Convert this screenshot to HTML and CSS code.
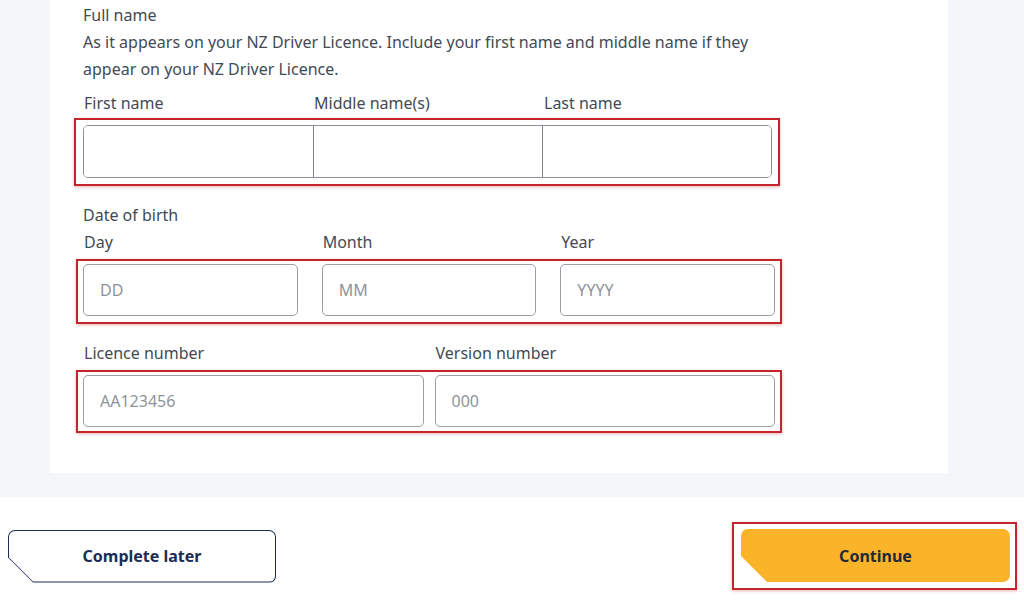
FILE: index.html
```html
<!DOCTYPE html>
<html>
<head>
<meta name="viewport" content="width=device-width, initial-scale=1">
<link rel="stylesheet" href="styles.css">
</head>
<body>

<div class="page">
  <div class="card">
    <div class="intro">
      <div>Full name</div>
      <p class="hint">As it appears on your NZ Driver Licence. Include your first name and middle name if they appear on your NZ Driver Licence.</p>
    </div>

    <div class="cols3 labels">
      <label>First name</label>
      <label>Middle name(s)</label>
      <label>Last name</label>
    </div>
    <div class="mark mark-names">
      <div class="names">
        <input type="text">
        <input type="text">
        <input type="text">
      </div>
    </div>

    <div class="group-title">Date of birth</div>
    <div class="cols3 dob labels">
      <label>Day</label>
      <label>Month</label>
      <label>Year</label>
    </div>
    <div class="mark mark-row">
      <div class="cols3 dob">
        <input type="text" placeholder="DD">
        <input type="text" placeholder="MM">
        <input type="text" placeholder="YYYY">
      </div>
    </div>

    <div class="cols2 labels lic-labels">
      <label>Licence number</label>
      <label>Version number</label>
    </div>
    <div class="mark mark-row mark-lic">
      <div class="cols2">
        <input type="text" placeholder="AA123456">
        <input type="text" placeholder="000">
      </div>
    </div>
  </div>
</div>

<div class="actions">
  <button type="button" class="btn-later"><span>Complete later</span></button>
  <div class="mark mark-btn">
    <button type="submit" class="btn-continue">Continue</button>
  </div>
</div>

</body>
</html>
```

FILE: styles.css
```css
body {
    margin: 0;
    font-family: "Noto Sans", Arial, sans-serif;
    color: #424a55;
    background: #fff;
}

.page {
    background: #f5f6f9;
    padding: 0 76px 24px 50px;
}

.card {
    background: #fff;
    padding: 2px 173px 40px 33px;
}

.intro {
    font-size: 16px;
    line-height: 27px;
}

.hint {
    margin: 0;
}

.labels {
    font-size: 16px;
    line-height: 22px;
}

.labels label {
    padding-left: 1px;
}

.cols3 {
    display: grid;
    grid-template-columns: 1fr 1fr 1fr;
}

.cols3.dob {
    column-gap: 24px;
}

.cols2 {
    display: grid;
    grid-template-columns: 1fr 1fr;
    column-gap: 11px;
}

.intro + .cols3 {
    margin-top: 9px;
    width: 690px;
}

/* red annotation boxes */
.mark {
    box-sizing: border-box;
    border: 2px solid #c4252c;
    box-shadow: 0 1px 3px rgba(196, 37, 44, 0.35);
}

.mark-names {
    margin: 4px 0 0 -9px;
    width: 706px;
    padding: 5px 6px 6px 7px;
}

.mark-row {
    margin: 5px -7px 0 -7px;
    padding: 3px 5px 6px 5px;
}

.mark-lic {
    padding-bottom: 4px;
}

.names {
    display: grid;
    grid-template-columns: 1fr 1fr 1fr;
    border: 1px solid #8b9098;
    border-radius: 5px;
    overflow: hidden;
}

.names input {
    border: none;
    border-radius: 0;
    height: 51px;
}

.names input + input {
    border-left: 1px solid #7d828a;
}

input {
    display: block;
    width: 100%;
    box-sizing: border-box;
    height: 52px;
    border: 1px solid #9a9ea5;
    border-radius: 5px;
    padding: 0 16px;
    font-family: inherit;
    font-size: 16px;
    color: #424a55;
    background: #fff;
}

input::placeholder {
    color: #8e939a;
}

.group-title {
    margin-top: 17px;
    font-size: 16px;
    line-height: 24px;
}

.dob.labels {
    margin-top: 3px;
    line-height: 24px;
}

.lic-labels {
    margin-top: 17px;
    line-height: 24px;
}

/* footer buttons */
.actions {
    display: flex;
    justify-content: space-between;
    align-items: center;
    padding: 25px 7px 14px 8px;
}

button {
    font-family: inherit;
    font-size: 16px;
    font-weight: bold;
    cursor: pointer;
}

.btn-later {
    width: 268px;
    height: 53px;
    padding: 1px;
    border: none;
    background: #1d2f55;
    border-radius: 7px;
    clip-path: polygon(0 0, 100% 0, 100% 100%, 25px 100%, 0 calc(100% - 25px));
}

.btn-later span {
    display: flex;
    align-items: center;
    justify-content: center;
    height: 100%;
    background: #fff;
    border-radius: 6px;
    clip-path: polygon(0 0, 100% 0, 100% 100%, 24px 100%, 0 calc(100% - 24px));
    color: #1b2d55;
}

.mark-btn {
    padding: 5px 5px 6px 7px;
}

.btn-continue {
    display: block;
    width: 269px;
    height: 53px;
    border: none;
    border-radius: 7px;
    background: #fbb42a;
    clip-path: polygon(0 0, 100% 0, 100% 100%, 26px 100%, 0 calc(100% - 26px));
    color: #1f2a36;
}
```
